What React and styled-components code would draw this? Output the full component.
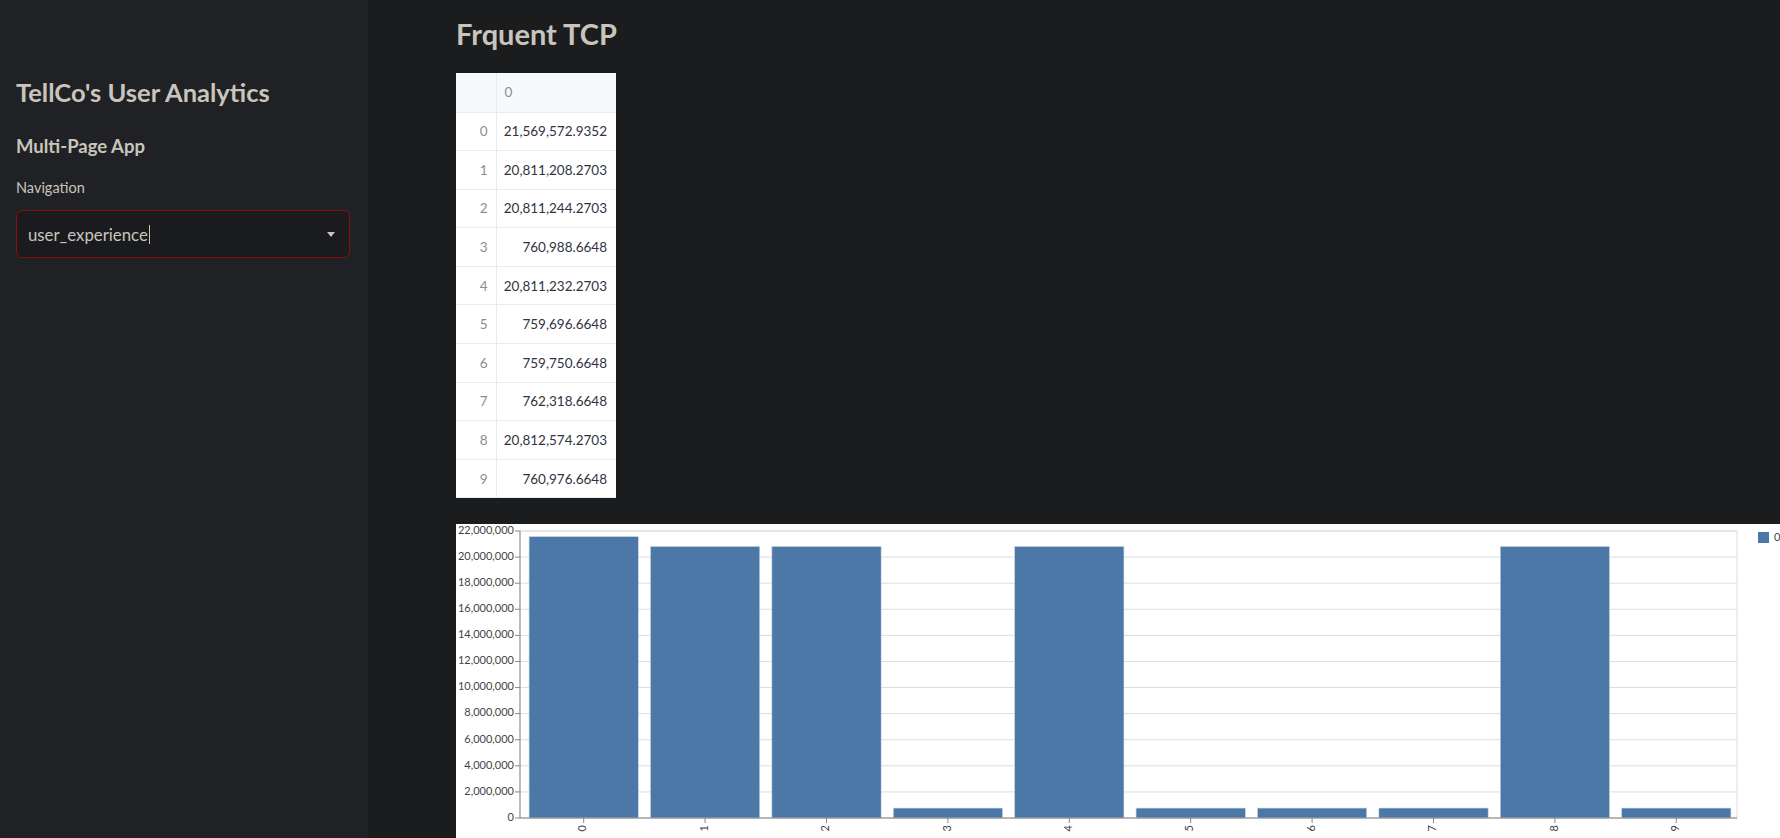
import React from "react";
import styled, { createGlobalStyle } from "styled-components";

const FONT = `Lato, "Noto Sans", "Liberation Sans", sans-serif`;
const BAR_COLOR = "#4c78a8";

const GlobalStyle = createGlobalStyle`
  html, body {
    margin: 0;
    padding: 0;
    background: #1b1c1e;
    overflow: hidden;
    font-family: ${FONT};
  }
`;

const rows = [
  21569572.9352, 20811208.2703, 20811244.2703, 760988.6648, 20811232.2703,
  759696.6648, 759750.6648, 762318.6648, 20812574.2703, 760976.6648
];

const fmt = (v) =>
  v.toLocaleString("en-US", { minimumFractionDigits: 4, maximumFractionDigits: 4 });

export default function App() {
  return (
    <>
      <GlobalStyle />
      <Layout>
        <Sidebar>
          <SideTitle>TellCo's User Analytics</SideTitle>
          <SubTitle>Multi-Page App</SubTitle>
          <Label>Navigation</Label>
          <Select>
            <SelectValue>
              user_experience
              <Caret />
            </SelectValue>
            <Arrow viewBox="0 0 8 5">
              <path d="M0 0h8L4 5z" fill="#c9c5bd" />
            </Arrow>
          </Select>
        </Sidebar>
        <Main>
          <PageTitle>Frquent TCP</PageTitle>
          <Table>
            <thead>
              <tr>
                <HeadCell index />
                <HeadCell>0</HeadCell>
              </tr>
            </thead>
            <tbody>
              {rows.map((v, i) => (
                <tr key={i}>
                  <IndexCell>{i}</IndexCell>
                  <ValueCell>{fmt(v)}</ValueCell>
                </tr>
              ))}
            </tbody>
          </Table>
          <ChartBox>
            <BarChart data={rows} />
          </ChartBox>
        </Main>
      </Layout>
    </>
  );
}

function BarChart({ data }) {
  const left = 64;
  const top = 7;
  const height = 287;
  const bottom = top + height;
  const band = 121.4;
  const plotLeft = left + 3;
  const right = plotLeft + band * data.length;
  const max = 22000000;
  const ticks = Array.from({ length: 12 }, (_, i) => i * 2000000);
  const y = (v) => bottom - (v / max) * height;

  return (
    <svg width="1400" height="360" style={{ display: "block" }}>
      {ticks.map((t) => (
        <line key={t} x1={left} x2={right} y1={y(t)} y2={y(t)} stroke="#dddddd" />
      ))}
      <rect x={left} y={top} width={right - left} height={height} fill="none" stroke="#dddddd" />
      {data.map((v, i) => (
        <rect
          key={i}
          x={plotLeft + band * i + band * 0.05}
          y={y(v)}
          width={band * 0.9}
          height={bottom - y(v)}
          fill={BAR_COLOR}
          stroke="#c7d4e4"
          strokeWidth="0.6"
        />
      ))}
      <line x1={left} x2={left} y1={top} y2={bottom} stroke="#888" />
      <line x1={left} x2={right} y1={bottom} y2={bottom} stroke="#888" />
      {ticks.map((t) => (
        <g key={t}>
          <line x1={left - 5} x2={left} y1={y(t)} y2={y(t)} stroke="#888" />
          <AxisText x={left - 6} y={y(t)} textAnchor="end" dominantBaseline="middle">
            {t.toLocaleString("en-US")}
          </AxisText>
        </g>
      ))}
      {data.map((_, i) => {
        const cx = plotLeft + band * i + band / 2;
        return (
          <g key={i}>
            <line x1={cx} x2={cx} y1={bottom} y2={bottom + 5} stroke="#888" />
            <AxisText
              x={cx}
              y={bottom + 7}
              textAnchor="end"
              dominantBaseline="middle"
              transform={`rotate(-90 ${cx} ${bottom + 7})`}
            >
              {i}
            </AxisText>
          </g>
        );
      })}
      <rect x="1302" y="8" width="11" height="11" fill={BAR_COLOR} />
      <AxisText x="1318" y="14" dominantBaseline="middle">0</AxisText>
    </svg>
  );
}

const Layout = styled.div`
  display: flex;
  height: 100vh;
  overflow: hidden;
`;

const Sidebar = styled.aside`
  width: 368px;
  flex-shrink: 0;
  background: #202124;
  padding: 76px 16px 0;
  box-sizing: border-box;
  color: #c9c5bd;
`;

const SideTitle = styled.h2`
  margin: 0;
  font-size: 25.5px;
  font-weight: 700;
  line-height: 32px;
`;

const SubTitle = styled.h3`
  margin: 25px 0 0;
  font-size: 18.5px;
  font-weight: 700;
  line-height: 26px;
`;

const Label = styled.div`
  margin-top: 19px;
  font-size: 14.5px;
  line-height: 20px;
`;

const Select = styled.div`
  margin-top: 12px;
  height: 48px;
  width: 334px;
  box-sizing: border-box;
  border: 1px solid #8a0d0d;
  border-radius: 6px;
  background: #1a1b1e;
  display: flex;
  align-items: center;
  justify-content: space-between;
  padding: 0 14px 0 11px;
`;

const SelectValue = styled.div`
  display: flex;
  align-items: center;
  font-size: 16.8px;
  color: #c9c5bd;
`;

const Caret = styled.span`
  display: inline-block;
  width: 1px;
  height: 19px;
  margin-left: 1px;
  background: #c9c5bd;
`;

const Arrow = styled.svg`
  width: 8px;
  height: 5px;
`;

const Main = styled.main`
  flex: 1;
  min-width: 0;
  padding: 14px 0 0 88px;
  display: flex;
  flex-direction: column;
  align-items: flex-start;
`;

const PageTitle = styled.h1`
  margin: 0;
  font-size: 29px;
  font-weight: 700;
  line-height: 40px;
  color: #c9c5bd;
`;

const Table = styled.table`
  margin-top: 19px;
  border-collapse: collapse;
  background: #ffffff;
  font-size: 13.5px;
  color: #31333f;
`;

const HeadCell = styled.th`
  height: 39px;
  box-sizing: border-box;
  width: ${({ index }) => (index ? "40px" : "120px")};
  padding: 0 8px;
  background: #f8f9fb;
  border-right: ${({ index }) => (index ? "1px solid #e8eaee" : "none")};
  border-bottom: 1px solid #e8eaee;
  color: #8a8d96;
  font-weight: 400;
  text-align: left;
`;

const IndexCell = styled.td`
  height: 38.6px;
  box-sizing: border-box;
  padding: 0 8px;
  text-align: right;
  color: #8a8d96;
  border-right: 1px solid #e8eaee;
  border-bottom: 1px solid #e8eaee;
`;

const ValueCell = styled.td`
  padding: 0 9px 0 6px;
  text-align: right;
  white-space: nowrap;
  border-bottom: 1px solid #e8eaee;
`;

const ChartBox = styled.div`
  margin-top: 26px;
  width: 1400px;
  background: #ffffff;
`;

const AxisText = styled.text`
  font-family: ${FONT};
  font-size: 11px;
  fill: #444444;
`;
